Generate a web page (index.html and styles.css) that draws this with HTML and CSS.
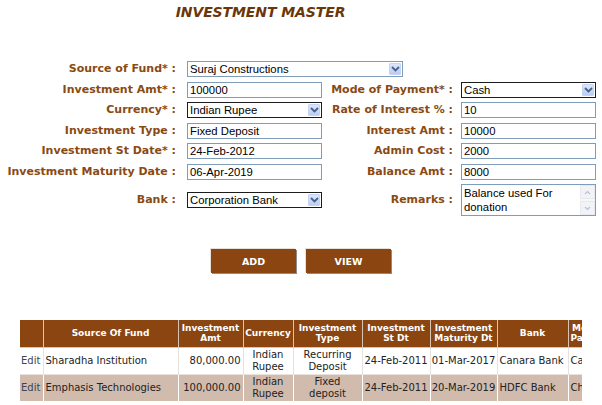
FILE: index.html
```html
<!DOCTYPE html>
<html>
<head>
<meta charset="utf-8">
<link rel="stylesheet" href="styles.css">
</head>
<body>
<h1 class="title">INVESTMENT MASTER</h1>

<div class="form">
  <label class="lbl lbl1">Source of Fund* :</label>
  <div class="sel sel-wide">
    <span class="sel-text">Suraj Constructions</span>
    <span class="arrow"><svg width="9" height="6" viewBox="0 0 9 6"><path d="M1 1 L4.5 4.5 L8 1" fill="none" stroke="#4d6185" stroke-width="1.8"/></svg></span>
  </div>
  <div></div>

  <label class="lbl lbl1">Investment Amt* :</label>
  <input class="inp" type="text" value="100000">
  <label class="lbl lbl2">Mode of Payment* :</label>
  <div class="sel sel-dark">
    <span class="sel-text">Cash</span>
    <span class="arrow"><svg width="9" height="6" viewBox="0 0 9 6"><path d="M1 1 L4.5 4.5 L8 1" fill="none" stroke="#4d6185" stroke-width="1.8"/></svg></span>
  </div>

  <label class="lbl lbl1">Currency* :</label>
  <div class="sel sel-dark">
    <span class="sel-text">Indian Rupee</span>
    <span class="arrow"><svg width="9" height="6" viewBox="0 0 9 6"><path d="M1 1 L4.5 4.5 L8 1" fill="none" stroke="#4d6185" stroke-width="1.8"/></svg></span>
  </div>
  <label class="lbl lbl2">Rate of Interest % :</label>
  <input class="inp" type="text" value="10">

  <label class="lbl lbl1">Investment Type :</label>
  <input class="inp" type="text" value="Fixed Deposit">
  <label class="lbl lbl2">Interest Amt :</label>
  <input class="inp" type="text" value="10000">

  <label class="lbl lbl1">Investment St Date* :</label>
  <input class="inp" type="text" value="24-Feb-2012">
  <label class="lbl lbl2">Admin Cost :</label>
  <input class="inp" type="text" value="2000">

  <label class="lbl lbl1">Investment Maturity Date :</label>
  <input class="inp" type="text" value="06-Apr-2019">
  <label class="lbl lbl2">Balance Amt :</label>
  <input class="inp" type="text" value="8000">

  <label class="lbl lbl1">Bank :</label>
  <div class="sel sel-dark">
    <span class="sel-text">Corporation Bank</span>
    <span class="arrow"><svg width="9" height="6" viewBox="0 0 9 6"><path d="M1 1 L4.5 4.5 L8 1" fill="none" stroke="#4d6185" stroke-width="1.8"/></svg></span>
  </div>
  <label class="lbl lbl2">Remarks :</label>
  <div class="tarea">
    <div class="tarea-text">Balance used For donation</div>
    <div class="scroll">
      <span class="sbtn"><svg width="7" height="5" viewBox="0 0 7 5"><path d="M1 4 L3.5 1.5 L6 4" fill="none" stroke="#b8c2d2" stroke-width="1.2"/></svg></span>
      <span class="sbtn"><svg width="7" height="5" viewBox="0 0 7 5"><path d="M1 1 L3.5 3.5 L6 1" fill="none" stroke="#b8c2d2" stroke-width="1.2"/></svg></span>
    </div>
  </div>
</div>

<div class="buttons">
  <button class="btn">ADD</button>
  <button class="btn">VIEW</button>
</div>

<div class="grid-wrap">
  <table class="grid">
    <colgroup>
      <col class="c-edit"><col class="c-src"><col class="c-amt"><col class="c-cur"><col class="c-type"><col class="c-st"><col class="c-mat"><col class="c-bank"><col class="c-mode">
    </colgroup>
    <thead>
      <tr>
        <th></th>
        <th>Source Of Fund</th>
        <th>Investment Amt</th>
        <th>Currency</th>
        <th>Investment Type</th>
        <th>Investment St Dt</th>
        <th>Investment Maturity Dt</th>
        <th>Bank</th>
        <th>Mode of Payment</th>
      </tr>
    </thead>
    <tbody>
      <tr class="r1">
        <td class="edit">Edit</td>
        <td>Sharadha Institution</td>
        <td class="num">80,000.00</td>
        <td class="ctr">Indian Rupee</td>
        <td class="ctr">Recurring Deposit</td>
        <td class="date">24-Feb-2011</td>
        <td class="date">01-Mar-2017</td>
        <td class="nw">Canara Bank</td>
        <td>Cash</td>
      </tr>
      <tr class="r2">
        <td class="edit">Edit</td>
        <td>Emphasis Technologies</td>
        <td class="num">100,000.00</td>
        <td class="ctr">Indian Rupee</td>
        <td class="ctr">Fixed deposit</td>
        <td class="date">24-Feb-2011</td>
        <td class="date">20-Mar-2019</td>
        <td class="nw">HDFC Bank</td>
        <td>Cheque</td>
      </tr>
    </tbody>
  </table>
</div>
</body>
</html>
```

FILE: styles.css
```css
html, body {
  margin: 0;
  padding: 0;
  background: #ffffff;
}

body {
  width: 602px;
  height: 405px;
  overflow: hidden;
  font-family: "DejaVu Sans", Verdana, sans-serif;
}

.title {
  margin: 0;
  padding-top: 4px;
  width: 521px;
  text-align: center;
  font-size: 14px;
  line-height: 16px;
  font-weight: bold;
  font-style: italic;
  color: #6b3608;
  letter-spacing: -0.1px;
}

.form {
  margin-top: 41px;
  display: grid;
  grid-template-columns: 187px 135px 139px 135px;
  grid-template-rows: repeat(6, 16px) 32px;
  row-gap: 4.5px;
  align-items: center;
}

.lbl {
  font-size: 11px;
  font-weight: bold;
  color: #8a4a13;
  text-align: right;
  white-space: nowrap;
  line-height: 16px;
}

.lbl1 { padding-right: 11px; }
.lbl2 { padding-right: 8px; }

.inp {
  box-sizing: border-box;
  width: 135px;
  height: 16px;
  margin: 0;
  padding: 0 2px;
  border: 1px solid #7f9db9;
  font-family: "Liberation Sans", Arial, sans-serif;
  font-size: 11.3px;
  color: #000;
  background: #fff;
  outline: none;
}

.sel {
  position: relative;
  box-sizing: border-box;
  width: 135px;
  height: 16px;
  border: 1px solid #7f9db9;
  background: #fff;
  display: flex;
  align-items: center;
  font-family: "Liberation Sans", Arial, sans-serif;
  font-size: 11.3px;
  color: #000;
}

.sel-wide {
  width: 216px;
  grid-column: 2 / span 2;
}

.sel-dark {
  border-color: #1c1c1c;
}

.sel-text {
  padding-left: 2px;
  white-space: nowrap;
}

.arrow {
  position: absolute;
  right: 1px;
  top: 1px;
  width: 12px;
  height: 12px;
  box-sizing: border-box;
  border: 1px solid #c4d4f4;
  border-radius: 1px;
  background: linear-gradient(#dbe6fb, #b9cdf6);
  display: flex;
  align-items: center;
  justify-content: center;
}

.tarea {
  box-sizing: border-box;
  width: 135px;
  height: 32px;
  border: 1px solid #7f9db9;
  display: flex;
  font-family: "Liberation Sans", Arial, sans-serif;
  font-size: 11.3px;
  line-height: 14px;
  color: #000;
  background: #fff;
}

.tarea-text {
  flex: 1;
  padding: 1px 2px 0;
}

.scroll {
  width: 15px;
  display: flex;
  flex-direction: column;
  justify-content: space-between;
  background: #f7f7f4;
}

.sbtn {
  height: 14px;
  box-sizing: border-box;
  border: 1px solid #e6eaf0;
  background: #f1f3f7;
  display: flex;
  align-items: center;
  justify-content: center;
}

.buttons {
  margin-top: 33px;
  padding-left: 211px;
  display: flex;
  gap: 10px;
}

.btn {
  width: 85px;
  height: 24px;
  margin: 0;
  padding: 0;
  border: none;
  background: #8b4510;
  color: #ffffff;
  font-family: "DejaVu Sans", Verdana, sans-serif;
  font-size: 9.5px;
  font-weight: bold;
  box-shadow: 1px 1px 0 #8c8c8c, -1px -1px 0 #e8e0d8;
}

.grid-wrap {
  margin-top: 47px;
  margin-left: 20px;
  width: 562px;
  overflow: hidden;
}

.grid {
  border-collapse: collapse;
  table-layout: fixed;
  width: 597px;
}

.c-edit { width: 23px; }
.c-src { width: 135px; }
.c-amt { width: 65px; }
.c-cur { width: 50px; }
.c-type { width: 69px; }
.c-st { width: 68px; }
.c-mat { width: 67px; }
.c-bank { width: 71px; }
.c-mode { width: 49px; }

.grid th {
  height: 27px;
  box-sizing: border-box;
  padding: 1px 0;
  background: #8b4510;
  color: #fff;
  font-size: 9px;
  line-height: 10px;
  font-weight: bold;
  text-align: center;
  border: 1px solid #d9c4b4;
  border-top: none;
  overflow: hidden;
}

.grid th:first-child { border-left: none; }

.grid td {
  height: 27px;
  box-sizing: border-box;
  padding: 0 2px;
  font-size: 10px;
  line-height: 12px;
  color: #222;
  border: 1px solid #e9e1dc;
  overflow: hidden;
}

.grid td:first-child { border-left: none; }

.grid .r1 td { background: #ffffff; }
.grid .r2 td { background: #d1bbad; border-color: #ffffff; }

.grid .edit { color: #3a4656; padding: 0 1px; }
.grid .num { text-align: right; }
.grid .ctr { text-align: center; }
.grid .date { text-align: center; white-space: nowrap; padding: 0; }
.grid .nw { white-space: nowrap; }
```
